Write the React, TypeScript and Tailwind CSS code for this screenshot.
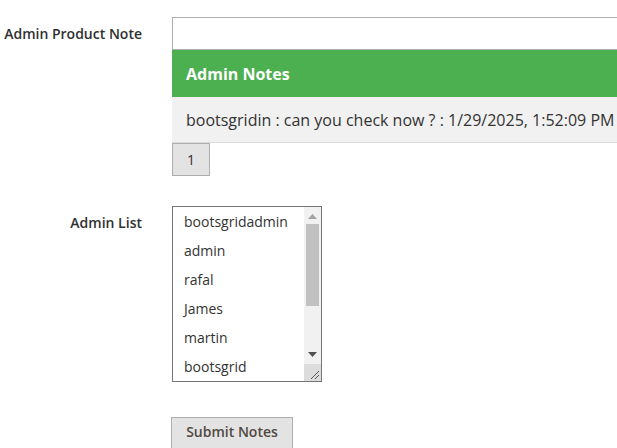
import React from 'react';

const admins = ['bootsgridadmin', 'admin', 'rafal', 'James', 'martin', 'bootsgrid'];

const FieldLabel = ({ text, className = '' }: { text: string; className?: string }) => (
  <label className={`w-[142px] shrink-0 text-right text-[14px] font-semibold text-[#303030] leading-[19px] ${className}`}>
    {text}
  </label>
);

const AdminListBox = () => (
  <div className="relative w-[150px] h-[176px] border border-[#767676] bg-white overflow-hidden">
    <ul className="pr-[17px]">
      {admins.map((name) => (
        <li key={name} className="pl-[11px] h-[29px] leading-[29px] text-[14px] text-[#333]">
          {name}
        </li>
      ))}
    </ul>
    {/* fake scrollbar */}
    <div className="absolute top-0 right-0 w-[17px] h-[157px] bg-[#f1f1f1]">
      <svg className="absolute left-[4px] top-[7px]" width="9" height="5" viewBox="0 0 9 5">
        <path d="M0 5 L4.5 0 L9 5 Z" fill="#a3a3a3" />
      </svg>
      <div className="absolute left-[2px] top-[17px] w-[13px] h-[82px] bg-[#c1c1c1]" />
      <svg className="absolute left-[4px] top-[145px]" width="9" height="5" viewBox="0 0 9 5">
        <path d="M0 0 L9 0 L4.5 5 Z" fill="#505050" />
      </svg>
    </div>
    <div className="absolute right-0 bottom-0 w-[17px] h-[17px] bg-[#dcdcdc]">
      <svg className="absolute right-[2px] bottom-[2px]" width="10" height="10" viewBox="0 0 10 10">
        <path d="M10 2 L2 10 M10 6 L6 10" stroke="#555" strokeWidth="1" />
      </svg>
    </div>
  </div>
);

export default function App() {
  return (
    <div className="w-[617px] h-[448px] overflow-hidden bg-white font-['Open_Sans',sans-serif] text-[#303030]">
      <div className="pt-[17px] flex flex-col">
        <div className="flex">
          <FieldLabel text="Admin Product Note" className="pt-[7px]" />
          <div className="ml-[30px] w-[480px] shrink-0">
            <div className="h-[33px] border border-[#adadad] bg-white" />
            <div className="h-[47px] bg-[#4caf50] pl-[14px] flex items-center text-white font-bold text-[16px]">
              Admin Notes
            </div>
            <div className="h-[46px] bg-[#f1f1f1] border-b border-[#dcdcdc] pl-[14px] flex items-center text-[16px] text-[#333]">
              bootsgridin : can you check now ? : 1/29/2025, 1:52:09 PM
            </div>
            <button className="w-[38px] h-[33px] bg-[#e3e3e3] border border-[#adadad] text-[14px] text-[#303030]">
              1
            </button>
          </div>
        </div>

        <div className="flex mt-[30px]">
          <FieldLabel text="Admin List" className="pt-[7px]" />
          <div className="ml-[30px]">
            <AdminListBox />
          </div>
        </div>

        <div className="flex mt-[35px]">
          <div className="w-[142px] shrink-0" />
          <button className="ml-[29px] w-[122px] h-[40px] pb-[12px] bg-[#e3e3e3] border border-[#adadad] text-[14px] font-semibold text-[#514943]">
            Submit Notes
          </button>
        </div>
      </div>
    </div>
  );
}
